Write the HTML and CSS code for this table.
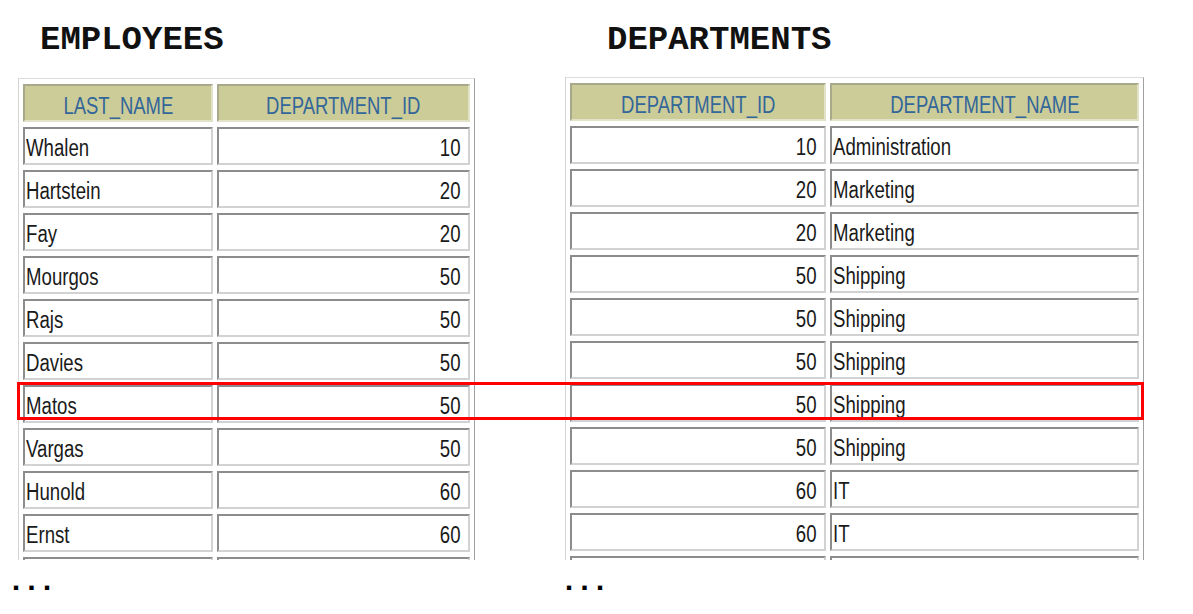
FILE: index.html
```html
<!DOCTYPE html>
<html>
<head>
<meta charset="utf-8">
<title>Employees and Departments</title>
<link rel="stylesheet" href="styles.css">
</head>
<body>
<div class="page">
  <section class="block block-emp">
    <h2 class="title">EMPLOYEES</h2>
    <div class="clip">
      <table class="grid grid-emp">
        <colgroup><col class="c-name"><col class="c-id"></colgroup>
        <thead>
          <tr><th><span class="t">LAST_NAME</span></th><th><span class="t">DEPARTMENT_ID</span></th></tr>
        </thead>
        <tbody>
          <tr><td><span class="t">Whalen</span></td><td class="num"><span class="t">10</span></td></tr>
          <tr><td><span class="t">Hartstein</span></td><td class="num"><span class="t">20</span></td></tr>
          <tr><td><span class="t">Fay</span></td><td class="num"><span class="t">20</span></td></tr>
          <tr><td><span class="t">Mourgos</span></td><td class="num"><span class="t">50</span></td></tr>
          <tr><td><span class="t">Rajs</span></td><td class="num"><span class="t">50</span></td></tr>
          <tr><td><span class="t">Davies</span></td><td class="num"><span class="t">50</span></td></tr>
          <tr><td><span class="t">Matos</span></td><td class="num"><span class="t">50</span></td></tr>
          <tr><td><span class="t">Vargas</span></td><td class="num"><span class="t">50</span></td></tr>
          <tr><td><span class="t">Hunold</span></td><td class="num"><span class="t">60</span></td></tr>
          <tr><td><span class="t">Ernst</span></td><td class="num"><span class="t">60</span></td></tr>
          <tr class="partial"><td></td><td class="num"></td></tr>
        </tbody>
      </table>
    </div>
    <div class="more">...</div>
  </section>
  <section class="block block-dept">
    <h2 class="title">DEPARTMENTS</h2>
    <div class="clip">
      <table class="grid grid-dept">
        <colgroup><col class="c-did"><col class="c-dname"></colgroup>
        <thead>
          <tr><th><span class="t">DEPARTMENT_ID</span></th><th><span class="t">DEPARTMENT_NAME</span></th></tr>
        </thead>
        <tbody>
          <tr><td class="num"><span class="t">10</span></td><td><span class="t">Administration</span></td></tr>
          <tr><td class="num"><span class="t">20</span></td><td><span class="t">Marketing</span></td></tr>
          <tr><td class="num"><span class="t">20</span></td><td><span class="t">Marketing</span></td></tr>
          <tr><td class="num"><span class="t">50</span></td><td><span class="t">Shipping</span></td></tr>
          <tr><td class="num"><span class="t">50</span></td><td><span class="t">Shipping</span></td></tr>
          <tr><td class="num"><span class="t">50</span></td><td><span class="t">Shipping</span></td></tr>
          <tr><td class="num"><span class="t">50</span></td><td><span class="t">Shipping</span></td></tr>
          <tr><td class="num"><span class="t">50</span></td><td><span class="t">Shipping</span></td></tr>
          <tr><td class="num"><span class="t">60</span></td><td><span class="t">IT</span></td></tr>
          <tr><td class="num"><span class="t">60</span></td><td><span class="t">IT</span></td></tr>
          <tr class="partial"><td class="num"></td><td></td></tr>
        </tbody>
      </table>
    </div>
    <div class="more">...</div>
  </section>
  <div class="highlight"></div>
</div>
</body>
</html>
```

FILE: styles.css
```css
html, body {
  margin: 0;
  padding: 0;
  background: #ffffff;
}

.page {
  position: relative;
  display: flex;
  gap: 90px;
  padding-left: 18px;
  width: 1193px;
  height: 614px;
  box-sizing: border-box;
  overflow: hidden;
}

.block {
  display: flex;
  flex-direction: column;
}

.title {
  margin: 23px 0 0 0;
  font-family: "Liberation Mono", "Courier New", monospace;
  font-weight: bold;
  font-size: 34px;
  line-height: 34px;
  color: #111;
}

.block-emp .title { margin-left: 22px; }
.block-dept .title { margin-left: 42px; }

.clip {
  overflow: hidden;
}

.block-emp .clip { margin-top: 21px; height: 482px; }
.block-dept .clip { margin-top: 20px; height: 483px; }

.grid {
  border-collapse: separate;
  border-spacing: 4px 5px;
  border: 1px solid;
  border-color: #dcdcdc #a0a0a0 #a0a0a0 #d4d4d4;
  table-layout: fixed;
  font-family: "Liberation Sans", Arial, sans-serif;
  font-size: 23px;
}

.grid-emp { width: 457px; }
.grid-dept { width: 579px; }

.c-name { width: 190px; }
.c-id { width: 253px; }
.c-did { width: 256px; }
.c-dname { width: 309px; }

.grid th,
.grid td {
  box-sizing: border-box;
  height: 38px;
  padding: 5px 0 0 1px;
  line-height: 29px;
  border: 2px solid;
  border-color: #8c8c8c #d2d2d2 #d2d2d2 #8c8c8c;
  white-space: nowrap;
  overflow: hidden;
  vertical-align: top;
}

.grid .t {
  display: inline-block;
  transform: scaleX(0.81);
  transform-origin: left center;
}

.grid th {
  background: #cccc99;
  color: #336699;
  font-weight: normal;
  font-size: 24px;
  text-align: center;
  padding-left: 0;
  border-color: #a8a88a #e2e2c8 #e2e2c8 #a8a88a;
}

.grid th .t {
  transform: scaleX(0.77);
  transform-origin: center center;
}

.grid td {
  background: #ffffff;
  color: #1a1a1a;
  text-align: left;
}

.grid td.num {
  text-align: right;
  padding-right: 7px;
}

.grid td.num .t {
  transform-origin: right center;
}

.more {
  margin-top: 8px;
  font-family: "Liberation Mono", "Courier New", monospace;
  font-weight: bold;
  font-size: 30px;
  line-height: 28px;
  letter-spacing: -2.5px;
  color: #000;
}

.block-emp .more { margin-left: -11px; }
.block-dept .more { margin-left: -5px; }

.highlight {
  position: absolute;
  left: 17px;
  top: 382px;
  width: 1127px;
  height: 38px;
  box-sizing: border-box;
  border: 3px solid #ff0000;
  pointer-events: none;
}
```
